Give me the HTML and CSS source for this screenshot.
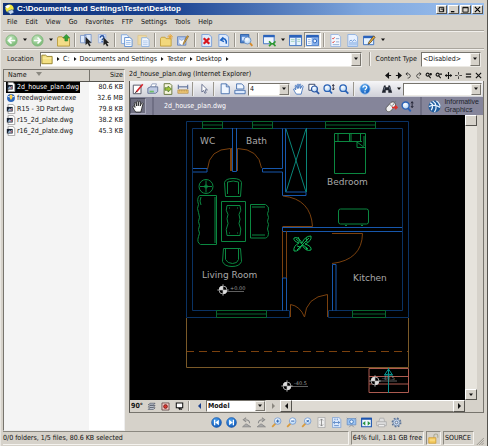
FILE: index.html
```html
<!DOCTYPE html>
<html lang="en">
<head>
<meta charset="utf-8">
<title>C:\Documents and Settings\Tester\Desktop</title>
<link rel="stylesheet" href="styles.css">
</head>
<body>
<svg class="defs" aria-hidden="true">
  <defs>
    <radialGradient id="gGreen" cx=".4" cy=".3" r=".8"><stop offset="0" stop-color="#c4e6bf"/><stop offset="1" stop-color="#6fb36b"/></radialGradient>
    <radialGradient id="gBlue" cx=".4" cy=".3" r=".8"><stop offset="0" stop-color="#4ea2ee"/><stop offset="1" stop-color="#0b53b4"/></radialGradient>
    <radialGradient id="gLens" cx=".4" cy=".3" r=".8"><stop offset="0" stop-color="#fff"/><stop offset="1" stop-color="#a5cdf5"/></radialGradient>
    <symbol id="back" viewBox="0 0 14 14"><circle cx="7" cy="7" r="6" fill="url(#gGreen)" stroke="#80b87b"/><path d="M11 7H4M7 3.8L3.8 7 7 10.200" fill="none" stroke="#fff" stroke-width="1.800"/></symbol>
    <symbol id="fwd" viewBox="0 0 14 14"><circle cx="7" cy="7" r="6" fill="url(#gGreen)" stroke="#80b87b"/><path d="M3 7h7M7 3.800L10.200 7 7 10.200" fill="none" stroke="#fff" stroke-width="1.800"/></symbol>
    <symbol id="up" viewBox="0 0 14 14"><path d="M.5 4.500l1-1.500h4l1 1.500h7v8.500H.5z" fill="#f3dc88" stroke="#b99a3a"/><path d="M10 .5l3.500 3.500H11.500v3.500h-3V4H6.500z" fill="#35a435" stroke="#1b7a22" stroke-width=".6"/></symbol>
    <symbol id="selpages" viewBox="0 0 14 14"><path d="M.5 1.500h6v8h-6zM5 .5h7v9H5z" fill="#dfeafb" stroke="#7f9bcb"/><path d="M6 3l0 9 2-2 2 3.500 1.500-1L9.700 9.300H12.500z" fill="#222"/></symbol>
    <symbol id="selhelp" viewBox="0 0 14 14"><path d="M1.500.5h8v9h-8z" fill="#d8e5fa" stroke="#a5b8dc"/><path d="M3.500 4c0-3 4-2.500 4-.3 0 1.500-2 1.300-2 3M5.500 7.500v1.500" fill="none" stroke="#2550a0" stroke-width="1.400"/><path d="M7 3.500v9l2-2 1.800 3 1.500-1-1.800-2.700H13z" fill="#222"/></symbol>
    <symbol id="copy" viewBox="0 0 14 14"><path d="M1.500.8h6l1.500 1.500v8H1.500z" fill="#f0f6ff" stroke="#84a9dc"/><path d="M5 3.800h5.500l2.500 2v7.700H5z" fill="#fff" stroke="#5d8ed0"/><path d="M6.500 7h5M6.500 9h5M6.500 11h5" stroke="#8db4e8"/></symbol>
    <symbol id="paste" viewBox="0 0 14 14"><path d="M1 1.500h9v10H1z" fill="#eed9a4" stroke="#dcc893"/><path d="M5 4h5.500L13 6v7.500H5z" fill="#f4f8ff" stroke="#8fb2e0"/><path d="M6.500 7.500h5M6.500 9.500h5M6.500 11.500h5" stroke="#a9c5ea"/></symbol>
    <symbol id="newfolder" viewBox="0 0 14 14"><path d="M.5 5l1-1.500h4L6.500 5H12v8H.5z" fill="#f2d87c" stroke="#c4a03c"/><path d="M11 0v6M8 3h6M9 1l4 4M13 1L9 5" stroke="#e9a32c" stroke-width=".9"/></symbol>
    <symbol id="rename" viewBox="0 0 14 14"><path d="M.5 3h9v9h-9z" fill="#b7cdf3" stroke="#6484bd"/><path d="M2 5l3 2 3-2 1.500 5-4 2.500L2 10z" fill="#fff" stroke="#6484bd" stroke-width=".5"/><path d="M12.500 2.500L8 10l-1.500 1.500L7 9.300 11 2z" fill="#f1b23b" stroke="#7a5a20" stroke-width=".7"/></symbol>
    <symbol id="del" viewBox="0 0 14 14"><path d="M2 .5h7.500L12.500 3v10.500H2z" fill="#dfeafb" stroke="#7ba0d8"/><path d="M4 4.500l6 6M10 4.500l-6 6" stroke="#d8151d" stroke-width="2.400"/></symbol>
    <symbol id="undo" viewBox="0 0 14 14"><path d="M2 .5h7.500L12.500 3v10.500H2z" fill="#dfeafb" stroke="#7ba0d8"/><path d="M5 6c3-2 5.500 0 5 4.500M6.800 3.500L4 6.500l3.500 1.800" fill="none" stroke="#1d63c4" stroke-width="1.600"/></symbol>
    <symbol id="find" viewBox="0 0 14 14"><path d="M.5.5h9v9h-9z" fill="#4f84cf" stroke="#2c5fa8"/><path d="M2 3h4v4H2z" fill="#cfe2ff"/><circle cx="8" cy="7" r="3.800" fill="url(#gLens)" stroke="#6c93c8"/><path d="M10.800 9.800l2.500 3" stroke="#d58a2b" stroke-width="2"/></symbol>
    <symbol id="winadd" viewBox="0 0 14 14"><path d="M.5 1.500h11.500v9H.5z" fill="#eef5ff" stroke="#3a6fc0"/><path d="M.5 1h12v2.500H.5z" fill="#2a62bb"/><path d="M6.500 8l2.500 2.500L6.500 13M13.500 8L11 10.500l2.500 2.500M8 10.500h4" fill="none" stroke="#2d982f" stroke-width="1.700"/></symbol>
    <symbol id="winsplit" viewBox="0 0 14 14"><path d="M.5 1.500h13v11H.5z" fill="#e6f2fb" stroke="#3a6fc0"/><path d="M.5 1h13v3H.5z" fill="#2a62bb"/><path d="M7.500 4v8" stroke="#3a6fc0"/><path d="M2 6h4M2 8h4M9 6h3M9 8h3" stroke="#a5d3c0"/></symbol>
    <symbol id="winview" viewBox="0 0 14 14"><path d="M.5 1.500h13v11H.5z" fill="#fff" stroke="#3a6fc0"/><path d="M.5 1h13v3H.5z" fill="#2a62bb"/><path d="M6 4h7v8H6z" fill="#86b1ed"/><circle cx="9.500" cy="7.500" r="2" fill="#e8f2ff" stroke="#2a62bb"/><path d="M2 6h3M2 8h3M2 10h3" stroke="#9db8dd"/></symbol>
    <symbol id="checks" viewBox="0 0 14 14"><path d="M2 .5h8L12.500 3v10.500H2z" fill="#f4f8ff" stroke="#9bb7e2"/><path d="M3.500 4.500l1 1 1.500-2M3.500 8.500l1 1 1.500-2" fill="none" stroke="#e0443c"/><path d="M7.500 5H11M7.500 8.500H11M4 11.500h7" stroke="#8ba7d0"/></symbol>
    <symbol id="report" viewBox="0 0 14 14"><path d="M2 .5h8L12.500 3v10.500H2z" fill="#e8f1ff" stroke="#8dafe0"/><path d="M3 8.500h9v4H3z" fill="#acc8ee"/><path d="M3.500 8l2-1.500L7 8l2-2 2 2" fill="none" stroke="#6d99d6"/></symbol>
    <symbol id="winedit" viewBox="0 0 14 14"><path d="M.5 2.500h11v9H.5z" fill="#e4f2ff" stroke="#3a6fc0"/><path d="M.5 2h11v2.500H.5z" fill="#2a62bb"/><path d="M13 3.500L7.500 10 5.500 11l.8-2.300L11.500 2z" fill="#f1b23b" stroke="#4c3c20" stroke-width=".8"/></symbol>
    <symbol id="folder" viewBox="0 0 14 14"><path d="M1 2.500h4.500L7 4h6v8.500H1z" fill="#f4e184" stroke="#8d7a20"/><path d="M2 6h10" stroke="#fff3b0"/></symbol>
    <symbol id="dwg" viewBox="0 0 12 12"><path d="M2.500.5h6L10.500 3v8.500h-8z" fill="#fff" stroke="#999"/><path d="M1 3.500h7v5.500H1z" fill="#17202e"/><path d="M2 8l2-3 1 1 2-1.500V8z" fill="#9fbfdd"/><path d="M5 7.500l2-2v2z" fill="#d23b3b"/></symbol>
    <symbol id="exe" viewBox="0 0 12 12"><circle cx="6" cy="6" r="4.700" fill="#2c67bc"/><path d="M2 4q4 2 8 0" stroke="#dce9f8" stroke-width="1.200" fill="none"/><path d="M4.500 2h3v4L6 8.500 4.500 6z" fill="#ffcf45"/></symbol>
    <symbol id="markup" viewBox="0 0 14 14"><path d="M1.500 2.500h9v10h-9z" fill="#fff" stroke="#445"/><path d="M12.500 1.500L5 10.500" stroke="#d3232b" stroke-width="2"/><path d="M5.500 9.500L3.500 12" stroke="#222"/></symbol>
    <symbol id="print" viewBox="0 0 14 14"><path d="M4 5l2-4h5L9.500 5z" fill="#fff" stroke="#8694b5"/><path d="M1 6l3-1.500h8.500V10L10 12H1z" fill="#bec9e3" stroke="#5e6d93"/><path d="M3 9h5v2H3z" fill="#6ebd67"/></symbol>
    <symbol id="publish" viewBox="0 0 14 14"><path d="M2.500.8h7l2 2v10.500h-9z" fill="#f7f6dd" stroke="#596a2b"/><path d="M3.500 5.500H7V3.500l4 3.500-4 3.500v-2H3.500z" fill="#a2c43a" stroke="#38641c" stroke-width=".7"/></symbol>
    <symbol id="measure" viewBox="0 0 14 14"><path d="M1 8h12v4H1z" fill="#efc878" stroke="#a8803b" stroke-width=".7"/><path d="M1.500 2v5M12.500 2v5M2 4.500h10" stroke="#354d82"/><path d="M3 8v2M5 8v2M7 8v2M9 8v2M11 8v2" stroke="#a8803b" stroke-width=".6"/></symbol>
    <symbol id="pointer" viewBox="0 0 14 14"><path d="M4.500 1.500v9l2.200-1.800L8 12l1.500-.7L8.300 8H11z" fill="#fff" stroke="#4c5679" stroke-width=".9"/></symbol>
    <symbol id="page" viewBox="0 0 14 14"><path d="M2.500 1h6L12 4.500V12.500H2.500z" fill="#f0f6ff" stroke="#3f69a8"/><path d="M8.500 1v3.500H12" fill="none" stroke="#3f69a8"/></symbol>
    <symbol id="pagewide" viewBox="0 0 14 14"><path d="M3 1h6l2.500 2.500V7H3z" fill="#f0f6ff" stroke="#3f69a8"/><path d="M1 8.500h12v4H1z" fill="#dceaff" stroke="#3f69a8"/></symbol>
    <symbol id="hand" viewBox="0 0 14 14"><path d="M4 13C2.500 11 1 8.500.8 7c.8-.8 1.800 0 2.500 1L2.500 3.500c.2-1.200 1.300-1 1.600 0L5 6.500V2c.3-1.200 1.500-1.100 1.700 0v4.300L7.500 2c.4-1.200 1.600-.9 1.600.2L8.800 6.500l1.500-3c.6-1 1.700-.4 1.500.7L10.500 9 9.500 13z" fill="#fff" stroke="currentColor" stroke-width=".9"/></symbol>
    <symbol id="zoomwin" viewBox="0 0 14 14"><path d="M1 1.500h7v7H1z" fill="#fff" stroke="#253353"/><circle cx="7.500" cy="7" r="3.500" fill="url(#gLens)" stroke="#2a57a5" stroke-width="1.400"/><path d="M10 9.700l3 3" stroke="#2a57a5" stroke-width="2"/></symbol>
    <symbol id="zoomdyn" viewBox="0 0 14 14"><circle cx="5" cy="6" r="3.800" fill="url(#gLens)" stroke="#2a62b5" stroke-width="1.500"/><path d="M7.500 8.800l3 3.500" stroke="#2a62b5" stroke-width="2"/><path d="M12 2v6M10.800 3.500L12 1.800l1.200 1.700M10.800 6.500L12 8.200l1.200-1.700" fill="none" stroke="#223"/></symbol>
    <symbol id="zoomone" viewBox="0 0 14 14"><circle cx="6" cy="6" r="3.800" fill="url(#gLens)" stroke="#2a62b5" stroke-width="1.500"/><path d="M8.500 8.800l3.500 3.500" stroke="#2a62b5" stroke-width="2.200"/></symbol>
    <symbol id="help" viewBox="0 0 14 14"><circle cx="7" cy="7" r="6" fill="url(#gBlue)" stroke="#9ec4ee"/><path d="M4.500 5.500c.5-3 5-2.500 4.500 0C8.700 7 7 7 7 8.500M7 9.500V11" fill="none" stroke="#fff" stroke-width="1.500"/></symbol>
    <symbol id="binoc" viewBox="0 0 14 14"><path d="M3.500 3h2v2h3V3h2L13 11.500H8.500V8.500h-3v3H1z" fill="#20242e"/><path d="M3.500 8l.8-3M10 5l.8 3" stroke="#8991a5"/></symbol>
    <symbol id="mouse" viewBox="0 0 14 14"><path d="M1.500 8l5-5.500c3-1.500 6 1 4.500 4l-5 5.500C3 14 0 11 1.500 8z" fill="#f1f1f1" stroke="#555"/><path d="M5 4.500l4 4M8 6l2.500-3M10 2l2-1" stroke="#777" fill="none"/><path d="M7.500 8h5.500M11 6l2 2-2 2" stroke="#e32e27" stroke-width="1.500" fill="none"/></symbol>
    <symbol id="globe" viewBox="0 0 14 14"><circle cx="7" cy="7" r="6.500" fill="#1f5d9e"/><path d="M2 3c3 0 4 4 1.500 8M5 1c4 2 5 8 2 12M1 7c5-2 9-1 12 1M9 1c2 1 4 4 4 6" fill="none" stroke="#e8f3ff" stroke-width="1.300"/></symbol>
    <symbol id="layers" viewBox="0 0 14 14"><path d="M4.500 2h8L10 4.500H2zM4.500 5.500h8L10 8H2zM4.500 9h8L10 11.500H2z" fill="#e8edf5" stroke="#333b4c"/></symbol>
    <symbol id="record" viewBox="0 0 14 14"><path d="M1.500 1.500h11v11h-11z" fill="#f5c8c3" stroke="#3b2727"/><circle cx="7" cy="7" r="3" fill="#d8352e" stroke="#531311"/></symbol>
    <symbol id="screen" viewBox="0 0 14 14"><path d="M2 1.500h10v7.500H2z" fill="#fff" stroke="#111" stroke-width="1.600"/><path d="M5 9.500h4L7 13z" fill="#111"/><path d="M8 10h3v2H8z" fill="#111"/></symbol>
    <symbol id="first" viewBox="0 0 14 14"><circle cx="7" cy="7" r="6.300" fill="url(#gBlue)" stroke="#0d4796" stroke-width=".6"/><path d="M10 3.500v7L5.500 7zM3.800 3.500h1.600v7H3.800z" fill="#fff"/></symbol>
    <symbol id="last" viewBox="0 0 14 14"><circle cx="7" cy="7" r="6.300" fill="url(#gBlue)" stroke="#0d4796" stroke-width=".6"/><path d="M4 3.500v7L8.500 7zM8.600 3.500h1.600v7H8.600z" fill="#fff"/></symbol>
    <symbol id="rotl" viewBox="0 0 14 14"><path d="M2 12.500L6 9h1l5.500 3.500z" fill="#aaa" stroke="#858585"/><path d="M11 8c0-3-2-4.500-5.500-4.500M6.500 1L3 3.500 6.500 6" fill="none" stroke="#8a8a8a" stroke-width="1.300"/></symbol>
    <symbol id="rotr" viewBox="0 0 14 14"><path d="M1.500 12.500L6 9h1l5 3.500z" fill="#aaa" stroke="#858585"/><path d="M3 8c0-3 2-4.500 5.500-4.500M7.500 1L11 3.500 7.500 6" fill="none" stroke="#8a8a8a" stroke-width="1.300"/></symbol>
    <symbol id="lens" viewBox="0 0 14 14"><path d="M6 8l-4.500 4.500" stroke="#d99a3c" stroke-width="2.200"/><circle cx="8.500" cy="5.200" r="4.200" fill="url(#gLens)" stroke="#7499cf"/></symbol>
    <symbol id="fitv" viewBox="0 0 14 14"><path d="M2.500.5h9v13h-9z" fill="#eee" stroke="#a6a6a6"/><path d="M7 2.500v9M5 4.500l2-2 2 2M5 9.500l2 2 2-2" fill="none" stroke="#808080"/></symbol>
    <symbol id="fitp" viewBox="0 0 14 14"><path d="M2 .5h8L12.500 3v10.500H2z" fill="#dce9fc" stroke="#7c9fd3"/><path d="M3 7h8M5 5L3 7l2 2M9 5l2 2-2 2M4 11h6" fill="none" stroke="#4679be"/><path d="M5 2v2M8 2v2" stroke="#4679be"/></symbol>
    <symbol id="slides" viewBox="0 0 14 14"><path d="M1.500 2h11v8h-11z" fill="#9cc4f2" stroke="#668fc5"/><circle cx="7" cy="6" r="2.300" fill="#eaf4ff" stroke="#2f69b0"/><path d="M4 13l3-3 3 3M1 1l2 2M13 1l-2 2" fill="none" stroke="#858b98"/></symbol>
    <symbol id="fitw" viewBox="0 0 14 14"><path d="M.8 1.500h12.400v11H.8z" fill="#eff8ff" stroke="#1c54ae" stroke-width="1.400"/><path d="M.5 1h13v2.500H.5z" fill="#1c54ae"/><path d="M5.500 5v6L2 8zM8.500 5v6L12 8z" fill="#279340"/></symbol>
    <symbol id="printg" viewBox="0 0 14 14"><path d="M3.500 6L5 1.500h5l1 4.500M.8 6h12.400v5H.8z" fill="#ddd" stroke="#aaa"/><path d="M3 9.500h8v3H3z" fill="#eee" stroke="#aaa"/></symbol>
    <symbol id="gear" viewBox="0 0 14 14"><circle cx="7" cy="7" r="5.300" fill="none" stroke="#5c7498" stroke-width="2" stroke-dasharray="2.200 1.960"/><circle cx="7" cy="7" r="4.300" fill="#c5d7ee" stroke="#6c83a5"/><circle cx="7" cy="7" r="1.700" fill="#eee" stroke="#4f668c"/></symbol>
    <symbol id="lock" viewBox="0 0 14 14"><path d="M7.500 6V3.500c0-3 5-3 5 0V6" fill="none" stroke="#aaa890" stroke-width="1.300"/><path d="M1 6h9v7H1z" fill="#f4cb61" stroke="#d09c34"/><path d="M2 9h7" stroke="#ffe8a2"/></symbol>
    <symbol id="caret" viewBox="0 0 6 4"><path d="M1 .5h4L3 3z" fill="#111"/></symbol>
    <symbol id="tri" viewBox="0 0 4 6"><path d="M1 1v4l2.500-2z" fill="#111"/></symbol>
    <symbol id="triL" viewBox="0 0 6 8"><path d="M5 0v8L1 4z" fill="currentColor"/></symbol>
    <symbol id="triR" viewBox="0 0 6 8"><path d="M1 0v8l4-4z" fill="currentColor"/></symbol>
    <symbol id="mark" viewBox="-8 -8 16 16"><circle r="4" fill="#000" stroke="#c8c8c8" stroke-width=".8"/><path d="M0 0V-4A4 4 0 0 0-4 0zM0 0V4A4 4 0 0 0 4 0z" fill="#ddd"/><path d="M-6 0H6M0-6V6" stroke="#bbb" stroke-width=".6"/></symbol>
  </defs>
</svg>

<div class="window">
  <header class="title">
    <svg class="appicon" viewBox="0 0 12 12"><circle cx="6" cy="5" r="4.500" fill="#f3ea3f"/><path d="M1 3q3-3 6-1L4 5z" fill="#fff"/><path d="M4 8l5-2 2 3-4 2.500z" fill="#c5d6ee" stroke="#24508c" stroke-width=".6"/></svg>
    <h1>C:\Documents and Settings\Tester\Desktop</h1>
    <div class="winbtns">
      <button aria-label="Roll up"><svg viewBox="0 0 8 8"><path d="M1.500 1.500h5v5h-5zM3 3.500h3v3" fill="none" stroke="#000"/></svg></button>
      <button aria-label="Minimize"><svg viewBox="0 0 8 8"><path d="M1 6.500h4" stroke="#000" stroke-width="1.500"/></svg></button>
      <button aria-label="Maximize"><svg viewBox="0 0 8 8"><path d="M1 1.500h6v5.500H1zM1 2h6" fill="none" stroke="#000"/></svg></button>
      <button aria-label="Close"><svg viewBox="0 0 8 8"><path d="M1 1l6 6M7 1L1 7" stroke="#000" stroke-width="1.300"/></svg></button>
    </div>
  </header>

  <nav class="menu">
    <button>File</button><button>Edit</button><button>View</button><button>Go</button><button>Favorites</button><button>FTP</button><button>Settings</button><button>Tools</button><button>Help</button>
  </nav>

  <div class="toolbar">
    <button aria-label="Back"><svg><use href="#back"/></svg></button><button class="drop" aria-label="Back list"><svg><use href="#caret"/></svg></button>
    <button aria-label="Forward"><svg><use href="#fwd"/></svg></button><button class="drop" aria-label="Forward list"><svg><use href="#caret"/></svg></button>
    <button aria-label="Up"><svg><use href="#up"/></svg></button><i class="sep"></i>
    <button aria-label="Select"><svg><use href="#selpages"/></svg></button>
    <button aria-label="Select by pattern"><svg><use href="#selhelp"/></svg></button><i class="sep"></i>
    <button aria-label="Copy"><svg><use href="#copy"/></svg></button>
    <button aria-label="Paste"><svg><use href="#paste"/></svg></button><i class="sep"></i>
    <button aria-label="New folder"><svg><use href="#newfolder"/></svg></button>
    <button aria-label="Rename"><svg><use href="#rename"/></svg></button><i class="sep"></i>
    <button aria-label="Delete"><svg><use href="#del"/></svg></button>
    <button aria-label="Undo"><svg><use href="#undo"/></svg></button><i class="sep"></i>
    <button aria-label="Find"><svg><use href="#find"/></svg></button><i class="sep"></i>
    <button aria-label="Add pane"><svg><use href="#winadd"/></svg></button><button class="drop" aria-label="Pane list"><svg><use href="#caret"/></svg></button>
    <button aria-label="Split"><svg><use href="#winsplit"/></svg></button>
    <button class="pressed" aria-label="Viewer"><svg><use href="#winview"/></svg></button><i class="sep"></i>
    <button aria-label="Checklist"><svg><use href="#checks"/></svg></button>
    <button aria-label="Report"><svg><use href="#report"/></svg></button>
    <button aria-label="Edit"><svg><use href="#winedit"/></svg></button><button class="drop" aria-label="Edit list"><svg><use href="#caret"/></svg></button>
  </div>

  <div class="location">
    <span>Location</span>
    <div class="crumbs">
      <svg class="ico"><use href="#folder"/></svg>
      <svg class="tri"><use href="#tri"/></svg><a href="#">C:</a>
      <svg class="tri"><use href="#tri"/></svg><a href="#">Documents and Settings</a>
      <svg class="tri"><use href="#tri"/></svg><a href="#">Tester</a>
      <svg class="tri"><use href="#tri"/></svg><a href="#">Desktop</a>
      <svg class="tri"><use href="#tri"/></svg>
      <button class="boxarrow" aria-label="Location list"><svg><use href="#caret"/></svg></button>
    </div>
    <i class="sep"></i>
    <label for="ctype">Content Type</label>
    <span class="select ctype"><select id="ctype"><option>&lt;Disabled&gt;</option></select><span class="boxarrow"><svg><use href="#caret"/></svg></span></span>
  </div>

  <main>
    <section class="files">
      <table>
        <thead><tr><th class="name">Name <svg viewBox="0 0 6 4"><path d="M0 0h6L3 4z" fill="#8a8880"/></svg></th><th class="size">Size</th></tr></thead>
        <tbody>
          <tr><td class="name sel"><span><svg><use href="#dwg"/></svg>2d_house_plan.dwg</span></td><td class="size">80.6 KB</td></tr>
          <tr><td class="name"><span><svg><use href="#exe"/></svg>freedwgviewer.exe</span></td><td class="size">32.6 MB</td></tr>
          <tr><td class="name"><span><svg><use href="#dwg"/></svg>R15 - 3D Part.dwg</span></td><td class="size">79.8 KB</td></tr>
          <tr><td class="name"><span><svg><use href="#dwg"/></svg>r15_2d_plate.dwg</span></td><td class="size">38.2 KB</td></tr>
          <tr><td class="name"><span><svg><use href="#dwg"/></svg>r16_2d_plate.dwg</span></td><td class="size">45.3 KB</td></tr>
        </tbody>
      </table>
      <div class="blank"></div>
    </section>

    <section class="preview">
      <div class="ptitle">
        <h2>2d_house_plan.dwg (Internet Explorer)</h2>
        <div class="ptools">
          <button aria-label="Previous"><svg viewBox="0 0 8 8"><path d="M1.500 4H7M4 1.500v5L1 4z"/></svg></button>
          <button aria-label="Next"><svg viewBox="0 0 8 8"><path d="M1 4h5.500M4 1.500v5L7 4z"/></svg></button>
          <button aria-label="Rotate left"><svg class="thin" viewBox="0 0 8 8"><path d="M3 7c4 0 4-5 0-5H1.500M3 .5L1 2.200 3 4"/></svg></button>
          <button aria-label="Rotate right"><svg class="thin" viewBox="0 0 8 8"><path d="M5 7C1 7 1 2 5 2h1.500M5 .5l2 1.700L5 4"/></svg></button>
          <button aria-label="Zoom in"><svg viewBox="0 0 8 8"><circle cx="3" cy="3" r="1.700"/><path d="M4 4l2.500 3M5 2.500h3M6.500 1v3"/></svg></button>
          <button aria-label="Zoom out"><svg viewBox="0 0 8 8"><circle cx="3" cy="3" r="1.700"/><path d="M4 4l2.500 3M5 2.500h3"/></svg></button>
          <button aria-label="Fit"><svg viewBox="0 0 8 8"><path d="M0 4h8M4 0v8M1.500 2.500v3M6.500 2.500v3"/></svg></button>
          <button aria-label="Center"><svg class="thin" viewBox="0 0 8 8"><path d="M0 4h3M5 4h3M4 0v3M4 5v3"/></svg></button>
          <button aria-label="Menu"><svg viewBox="0 0 8 8"><path d="M1 2.500h6M1 5.500h6"/></svg></button>
          <button aria-label="Close viewer"><svg viewBox="0 0 8 8"><path d="M1 1l6 6M7 1L1 7"/></svg></button>
        </div>
      </div>
      <div class="viewer">
        <div class="vtools">
          <button aria-label="Markup"><svg><use href="#markup"/></svg></button>
          <button aria-label="Print"><svg><use href="#print"/></svg></button>
          <button aria-label="Publish"><svg><use href="#publish"/></svg></button>
          <button aria-label="Measure"><svg><use href="#measure"/></svg></button><i class="sep"></i>
          <button aria-label="Pointer"><svg><use href="#pointer"/></svg></button><i class="sep"></i>
          <button aria-label="Page"><svg><use href="#page"/></svg></button>
          <button aria-label="Page width"><svg><use href="#pagewide"/></svg></button>
          <span class="select pages"><select aria-label="Page number"><option>4</option></select><span class="boxarrow"><svg><use href="#caret"/></svg></span></span>
          <button class="panblue" aria-label="Pan"><svg><use href="#hand"/></svg></button>
          <button aria-label="Zoom window"><svg><use href="#zoomwin"/></svg></button>
          <button aria-label="Zoom dynamic"><svg><use href="#zoomdyn"/></svg></button>
          <button aria-label="Zoom"><svg><use href="#zoomone"/></svg></button><i class="sep"></i>
          <button aria-label="Help"><svg><use href="#help"/></svg></button><i class="gap"></i>
          <button aria-label="Search"><svg><use href="#binoc"/></svg></button><button class="drop" aria-label="Search options"><svg><use href="#caret"/></svg></button>
          <span class="select query"><input type="text" aria-label="Search text"><span class="boxarrow"><svg><use href="#caret"/></svg></span></span>
        </div>
        <div class="vhead">
          <button class="grab" aria-label="Pan tool"><svg><use href="#hand"/></svg></button>
          <i class="sep"></i>
          <span class="vname">2d_house_plan.dwg</span>
          <svg class="ico"><use href="#mouse"/></svg>
          <svg class="ico"><use href="#zoomdyn"/></svg>
          <i class="sep"></i>
          <svg class="ico"><use href="#globe"/></svg>
          <span class="brand">Informative<br>Graphics</span>
        </div>
        <div class="stage">
          <svg class="plan" viewBox="130 115 335 285" role="img" aria-label="House plan">
            <g fill="none" stroke-width="1">
              <g stroke="#0a3263">
                <path d="M289.500 310.500V317.500H186.500V121.500H408.500V317.500H328.500V310.500"/>
                <path d="M289 310.500H192.500V128.500H402.500V310.500H329"/>
              </g>
              <g stroke="#1757ac">
                <path d="M232.500 128V171.500H236.500V128M193 168.500h14v3.500h-14M282.500 168.500h-20v3.500h20v23.500H306v-3.500H285.500V128.500M282.500 128.500v40"/>
                <path d="M282 227.500H402M282 231.500H402M282.500 227v4M282.500 278v32.500M286.500 278v32.500M282.500 278h4M332.500 310.500V264.500h3.500v46"/>
              </g>
              <path stroke="#0a8578" d="M286 129L306 192M306 129L286 192M306.500 128V192"/>
              <g stroke="#7b410e">
                <path d="M230.500 171V148.500Q209 149 207.500 169M231.500 171v-23M237.500 171V148.500Q259 149 261.500 168M283 196Q311 199 312.500 226.500H282.500M282.500 231v47M286.500 231v47"/>
                <path d="M332 233.500H362.500Q362 260 332 263.500M290.500 317V304.500Q300 306 304.500 317Q306 297 327.500 294.500V317"/>
                <path d="M186 351.500H409" stroke-dasharray="8 5"/>
              </g>
              <path stroke="#7a5928" d="M186.500 318V367.500H408.500V318"/>
              <g stroke="#07662f">
                <path d="M202.500 121.500h20v7h-20zM202.500 125h20M252.500 121.500h20v7h-20zM252.500 125h20M325.500 121.500h50v7h-50zM325.500 125h50M216.500 310.500h50v7h-50zM216.500 314h50M352.500 310.500h33v7h-33zM352.500 314h33"/>
              </g>
              <g stroke="#0b8740">
                <circle cx="206" cy="186.500" r="7"/><circle cx="206" cy="186.500" r="1.500"/><path d="M200 186.500h12M206 180.500v12"/>
                <path d="M225.500 196.500l-1-14q1-4 8.500-4t8.500 4l-1 14zM227.500 194v-12q6-2 11 0v12"/>
                <path d="M199.500 195.500h17v49h-16q-4-2-2-8 2-3 0-7 2-4 0-8 2-4 0-9-2-4 0-8-2-6 1-9zM201 197q-2 4 0 8M215 197v46"/>
                <path d="M221.500 201.500h24v40h-24zM227 205.500h13q2 5-1 9 2 5 0 9 3 5 1 12h-13q-2-6 1-12-2-5 0-9-3-4-1-9zM229 208h1M237 208h1M229 233h1M237 233h1"/>
                <path d="M250.500 204.500h15q4 2 3 6-2 3 0 7-2 4 0 7-2 5 0 8 0 5-3 5.500h-15zM252 207h13M252 235h13"/>
                <path d="M223.500 248.500h17l1 13q-2 5-9.500 5t-9.500-5zM225.500 248.500v11q2 4 7 4t6-4v-11"/>
                <path d="M334.500 133.500h31v40h-31zM335 141.500h27M338 134v7M349.500 134v7M351 134v7M360.500 134v7M357 142v5.500h8M357 142l8 6M364 136v10"/>
                <path d="M338.500 211q0-2 2-2h26q2 0 2 2v11q0 2-2 2h-26q-2 0-2-2zM345 225.500h2M361 225.500h2"/>
              </g>
              <g stroke="#10b657">
                <path d="M294 238q4-2 8 5 3-7 9-7 1 5-6 8 7 2 6 6-5 2-9-5-3 7-8 6-1-5 5-8-6-2-5-5zM296 239l12 10M309 238l-12 12M298 237l2 4M306 238l1 4M297 246l3 1M306 247l1 3"/>
              </g>
              <g stroke="#ad5b50"><path d="M369 368.500h39.500V392.500H369zM369 376.500h39.500M369 384h39.500"/></g>
              <path stroke="#099390" d="M388.500 368v25M388.500 369l-4 6h8zM384.500 375l4-1 4 1"/>
              <path stroke="#888" stroke-width=".7" d="M223 291.500h21M287 386.500h21M376 381h21"/>
            </g>
            <use href="#mark" x="215" y="282" width="16" height="16"/>
            <use href="#mark" x="279" y="378" width="16" height="16"/>
            <use href="#mark" x="367" y="373" width="16" height="16"/>
            <g class="rooms">
              <text x="200" y="144">WC</text><text x="246" y="144">Bath</text><text x="327" y="185">Bedroom</text><text x="202" y="278">Living Room</text><text x="353" y="281">Kitchen</text>
            </g>
            <g class="levels"><text x="230" y="290">+0.00</text><text x="294" y="385">-40.5</text><text x="382" y="380">-40.5</text></g>
          </svg>
          <div class="vscroll"><button class="raised" aria-label="Scroll up"></button><i></i><button class="raised" aria-label="Scroll down"><svg><use href="#caret"/></svg></button></div>
        </div>
        <div class="vfoot">
          <button class="deg" aria-label="Rotate 90">90°</button>
          <button aria-label="Layers"><svg><use href="#layers"/></svg></button>
          <button aria-label="Snap"><svg><use href="#record"/></svg></button>
          <button aria-label="Display"><svg><use href="#screen"/></svg></button><i class="sep"></i>
          <button class="prev" aria-label="Previous layout"><svg><use href="#triL"/></svg></button>
          <span class="select model"><select aria-label="Layout"><option>Model</option></select><span class="boxarrow"><svg><use href="#caret"/></svg></span></span>
          <button class="next" aria-label="Next layout"><svg><use href="#triR"/></svg></button>
          <button class="raised" aria-label="Scroll left"><svg><use href="#triL"/></svg></button>
          <i class="track"></i>
          <button class="raised" aria-label="Scroll right"><svg><use href="#triR"/></svg></button>
          <i class="corner"></i>
        </div>
      </div>
      <div class="pnav">
        <button aria-label="First"><svg><use href="#first"/></svg></button>
        <button aria-label="Last"><svg><use href="#last"/></svg></button>
        <button aria-label="Turn left"><svg><use href="#rotl"/></svg></button>
        <button aria-label="Turn right"><svg><use href="#rotr"/></svg></button>
        <button aria-label="Magnify"><svg viewBox="0 0 14 14"><use href="#lens"/><path d="M6.500 5.200h4M8.500 3.200v4" stroke="#235cae" stroke-width="1.200"/></svg></button>
        <button aria-label="Reduce"><svg viewBox="0 0 14 14"><use href="#lens"/><path d="M6.500 5.200h4" stroke="#235cae" stroke-width="1.200"/></svg></button>
        <button aria-label="Original size"><svg viewBox="0 0 14 14"><use href="#lens"/><path d="M7 3.700l3 3M10 3.700l-3 3" stroke="#235cae" stroke-width="1.200"/></svg></button>
        <button aria-label="Fit height"><svg><use href="#fitv"/></svg></button>
        <button aria-label="Fit page"><svg><use href="#fitp"/></svg></button>
        <button aria-label="Slide show"><svg><use href="#slides"/></svg></button>
        <button aria-label="Fit window"><svg><use href="#fitw"/></svg></button>
        <button aria-label="Print page"><svg><use href="#printg"/></svg></button>
        <button aria-label="Settings"><svg><use href="#gear"/></svg></button>
      </div>
    </section>
  </main>

  <footer>
    <span class="cell grow">0/0 folders, 1/5 files, 80.6 KB selected</span>
    <span class="cell">64% full, 1.81 GB free</span>
    <span class="cell"><svg class="ico"><use href="#lock"/></svg></span>
    <span class="cell source">SOURCE</span>
    <svg class="grip" viewBox="0 0 10 10"><path d="M1 10l9-9M4 10l6-6M7 10l3-3" stroke="#8b8880"/></svg>
  </footer>
</div>
</body>
</html>
```
FILE: styles.css
```css
* { box-sizing: border-box; }

body {
  margin: 0;
  background: #d6d2ca;
  color: #111;
  font: 7px/11px "DejaVu Sans Condensed", "DejaVu Sans", sans-serif;
}

.defs { position: absolute; width: 0; height: 0; }

button {
  display: flex;
  align-items: center;
  justify-content: center;
  margin: 0;
  padding: 0;
  border: 0;
  background: none;
  color: inherit;
  font: inherit;
}

svg { display: block; flex: none; }
h1, h2 { margin: 0; font-size: inherit; font-weight: normal; }
a { color: inherit; text-decoration: none; }

.window {
  display: flex;
  flex-direction: column;
  min-height: 100vh;
  padding: 3px 3px 1px 2px;
  border-right: 1px solid #55534e;
  border-left: 1px solid #e9e7e2;
  border-bottom: 1px solid #55534e;
}

/* Title bar */
.title {
  display: flex;
  align-items: center;
  height: 12px;
  padding: 0 1px;
  background: linear-gradient(90deg, #0e3079, #1c4492 35%, #7fa7de 75%, #9cc0ee);
}
.title h1 { flex: 1; font: bold 8px/12px "Liberation Sans", sans-serif; color: #fff; }
.appicon { width: 11px; height: 11px; margin-right: 2px; }
.winbtns { display: flex; gap: 1px; }
.winbtns button, .raised {
  background: #d6d2ca;
  border: 1px solid;
  border-color: #fff #55534e #55534e #fff;
}
.winbtns button { width: 11px; height: 9px; }
.winbtns svg { width: 7px; height: 7px; }

/* Menu */
.menu { display: flex; gap: 8px; height: 16px; padding: 0 4px; border-bottom: 1px solid #aaa69e; }

/* Toolbars */
.toolbar { display: flex; align-items: center; height: 18px; border-bottom: 1px solid #aaa69e; border-top: 1px solid #f2f0ec; }
.toolbar button { width: 17px; height: 16px; }
.toolbar svg { width: 13px; height: 13px; }
.toolbar .drop, .vtools .drop { width: 9px; }
.drop svg, .boxarrow svg { width: 6px !important; height: 4px !important; }
.toolbar .pressed { background: #e9e7e2; border: 1px solid; border-color: #8b8880 #fff #fff #8b8880; }
.sep { flex: none; align-self: stretch; width: 2px; margin: 1px 2px; border-left: 1px solid #9a968e; border-right: 1px solid #f4f2ee; }

.location { display: flex; align-items: center; height: 19px; padding: 2px 3px 2px 4px; gap: 4px; border-top: 1px solid #f2f0ec; }
.location > span:first-child { width: 29px; }
.location .sep { margin: 0 1px; }
.crumbs, .select {
  display: flex;
  align-items: center;
  background: #fff;
  border: 1px solid;
  border-color: #77746d #eceae5 #eceae5 #77746d;
}
.crumbs { flex: 1; height: 15px; gap: 3px; margin-right: 2px; }
.crumbs .tri { width: 4px; height: 6px; }
.crumbs .ico { width: 12px; height: 12px; }
.ico { width: 13px; height: 13px; }
.boxarrow {
  display: flex;
  align-items: center;
  justify-content: center;
  width: 10px;
  align-self: stretch;
  margin-left: auto;
  background: #d6d2ca;
  border: 1px solid;
  border-color: #f5f3ef #77746d #77746d #f5f3ef;
  pointer-events: none;
}
.select select, .select input {
  flex: 1;
  width: 0;
  height: 100%;
  padding: 0 1px;
  border: 0;
  outline: 0;
  appearance: none;
  background: none;
  color: inherit;
  font: inherit;
}
.ctype { width: 60px; height: 15px; }

/* Content */
main { display: flex; flex: 1; gap: 4px; padding-top: 1px; }

.files { display: flex; flex-direction: column; width: 122px; background: #fff; border: 1px solid; border-color: #77746d #eee #eee #77746d; }
.files table { width: 100%; border-collapse: collapse; table-layout: fixed; }
.files th { height: 11px; padding: 0 4px; font-weight: normal; line-height: 10px; text-align: left; background: #d6d2ca; border-bottom: 1px solid #55534e; }
.files th.name { width: 85px; border-right: 1px solid #77746d; }
.files th svg { display: inline-block; width: 6px; height: 4px; margin-left: 7px; vertical-align: 1px; }
.files .size { padding: 0 1px 0 0; text-align: right; }
.files td { height: 11px; padding: 0; white-space: nowrap; }
.files td.name { padding-left: 2px; background: #f4f4f4; }
.files td span { display: flex; align-items: center; width: max-content; gap: 1px; padding-right: 1px; }
.files td svg { width: 10px; height: 10px; }
.files .sel span { background: #000; color: #fff; }
.blank { flex: 1; background: linear-gradient(90deg, #f4f4f4 85px, #fff 85px); }

.preview { display: flex; flex: 1; flex-direction: column; min-width: 0; }
.ptitle { display: flex; justify-content: space-between; height: 12px; }
.ptools { display: flex; align-items: center; padding-right: 1px; }
.ptools button { width: 10px; height: 10px; }
.ptools svg { width: 7px; height: 7px; fill: none; stroke: #111; stroke-width: 1.300; }
.ptools .thin { stroke-width: .8; }

.viewer { display: flex; flex: 1; flex-direction: column; border: 1px solid; border-top: 0; border-color: #77746d #77746d #77746d #55534e; }
.vtools { display: flex; align-items: center; height: 16px; background: linear-gradient(#f6f6f8, #cfd0d8); }
.vtools button { width: 15px; height: 14px; }
.vtools svg { width: 12px; height: 12px; }
.vtools .sep { border-right-color: #eee; }
.vtools .gap { width: 7px; }
.vtools .pages { width: 42px; height: 13px; margin: 0 1px; }
.vtools .query { flex: 1; height: 13px; margin-right: 1px; }
.panblue { color: #2a62b5; }

.vhead { display: flex; align-items: center; gap: 3px; height: 18px; padding-right: 4px; background: #85859a; color: #fff; }
.vhead .sep { margin: 0 3px; border-color: #a9a9bb #6f6f84; }
.vhead .grab { width: 16px; height: 16px; background: #6e6e80; border: 1px solid; border-color: #4f4f60 #a9a9bb #a9a9bb #4f4f60; color: #222; }
.grab svg { width: 13px; height: 13px; }
.vname { flex: 1; padding-left: 4px; }
.brand { color: #20232c; font: 7px/8px "Liberation Sans", sans-serif; }

.stage { display: flex; flex: 1; background: #000; }
.plan { flex: 1 1 0; min-width: 0; align-self: flex-start; }
.rooms { fill: #a9a9a9; font: 9px "DejaVu Sans", sans-serif; }
.levels { fill: #999; font: 5px "DejaVu Sans", sans-serif; }
.vscroll { display: flex; flex-direction: column; width: 18px; padding-right: 6px; background: #d6d2ca; }
.vscroll button { height: 11px; }
.vscroll svg { width: 6px; height: 4px; }
.vscroll i { flex: 1; background: #e6e3dc; }

.vfoot { display: flex; align-items: stretch; height: 12px; background: #d6d2ca; }
.vfoot button { width: 14px; }
.vfoot svg { width: 9px; height: 9px; }
.vfoot .raised { width: 12px; }
.vfoot .prev svg, .vfoot .next svg, .vfoot .raised svg { width: 5px; height: 6px; }
.vfoot .prev { color: #1b3f8c; }
.vfoot .next { color: #8b8880; }
.deg { font-weight: bold; }
.model { width: 60px; font-weight: bold; }
.track { flex: 1; background: #dedad3; border-top: 1px solid #fff; border-bottom: 1px solid #77746d; }
.corner { width: 18px; }

.pnav { display: flex; align-items: center; justify-content: center; height: 18px; }
.pnav button { width: 15px; height: 15px; }
.pnav svg { width: 11px; height: 11px; }

/* Status bar */
footer { display: flex; align-items: stretch; gap: 2px; height: 14px; }
.cell { display: flex; align-items: center; padding: 0 1px; border: 1px solid; border-color: #8b8880 #f5f3ef #f5f3ef #8b8880; }
.cell .ico { width: 11px; height: 11px; }
.grow { flex: 1; border-left: 0; padding-left: 0; }
.source { padding-right: 2px; }
.grip { width: 8px; height: 8px; align-self: flex-end; }
```
